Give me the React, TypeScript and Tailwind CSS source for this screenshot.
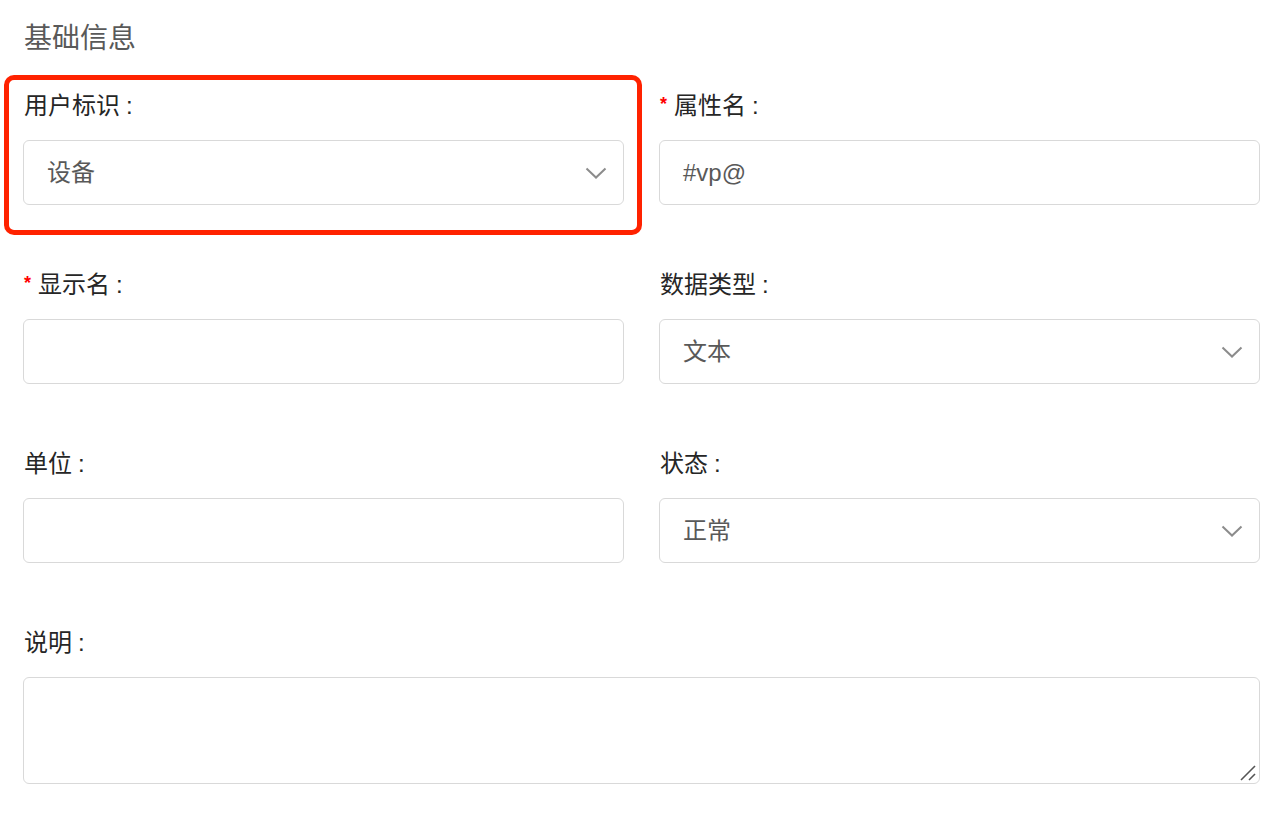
import React from "react";

const font = "font-['Liberation_Sans','Noto_Sans_CJK_SC',sans-serif]";

function Chevron() {
  return (
    <svg width="22" height="12" viewBox="0 0 22 12" className="shrink-0">
      <polyline points="1.5,1.5 11,10.5 20.5,1.5" fill="none" stroke="#8c8c8c" strokeWidth="2" />
    </svg>
  );
}

function Label({ text, required }: { text: string; required?: boolean }) {
  return (
    <div className="flex items-center h-9 mb-4 text-[24px] leading-9 text-[#262626]">
      {required && <span className="text-[#ff0000] font-bold text-[18px] mr-[7px] mt-[-5px]">*</span>}
      <span>{text}</span>
      <span className="ml-[6px]">:</span>
    </div>
  );
}

function Select({ value }: { value: string }) {
  return (
    <div className="h-[65px] border border-[#d9d9d9] rounded-[6px] flex items-center justify-between pl-[23px] pr-[16px] bg-white">
      <span className="text-[24px] text-[#595959]">{value}</span>
      <Chevron />
    </div>
  );
}

function Input({ value }: { value?: string }) {
  return (
    <div className="h-[65px] border border-[#d9d9d9] rounded-[6px] flex items-center pl-[23px] bg-white">
      <span className="text-[24px] text-[#595959]">{value}</span>
    </div>
  );
}

export default function App() {
  return (
    <div className={`${font} bg-white w-[1286px] h-[834px] pl-[23px] pr-[26px] pt-[19px]`}>
      <h2 className="text-[28px] leading-10 text-[#595959] pl-[1px]">基础信息</h2>

      <div className="grid grid-cols-2 gap-x-[35px] mt-[29px]">
        <div className="relative h-[179px]">
          {/* annotation box */}
          <div className="absolute -left-[19px] -top-[13px] -right-[18px] h-[160px] border-[5px] border-[#ff2200] rounded-[10px] pointer-events-none" />
          <div className="pl-[1px]"><Label text="用户标识" /></div>
          <Select value="设备" />
        </div>
        <div className="h-[179px]">
          <div className="pl-[1px]"><Label text="属性名" required /></div>
          <Input value="#vp@" />
        </div>

        <div className="h-[179px]">
          <div className="pl-[1px]"><Label text="显示名" required /></div>
          <Input />
        </div>
        <div className="h-[179px]">
          <div className="pl-[1px]"><Label text="数据类型" /></div>
          <Select value="文本" />
        </div>

        <div className="h-[179px]">
          <div className="pl-[1px]"><Label text="单位" /></div>
          <Input />
        </div>
        <div className="h-[179px]">
          <div className="pl-[1px]"><Label text="状态" /></div>
          <Select value="正常" />
        </div>

        <div className="col-span-2">
          <div className="pl-[1px]"><Label text="说明" /></div>
          <div className="relative">
            <textarea className="block w-full h-[107px] border border-[#d9d9d9] rounded-[6px] outline-none resize-none" />
            <svg width="18" height="18" viewBox="0 0 18 18" className="absolute right-[3px] bottom-[2px] pointer-events-none">
              <line x1="2" y1="16" x2="16" y2="2" stroke="#555" strokeWidth="1.6" />
              <line x1="10" y1="16" x2="16" y2="10" stroke="#555" strokeWidth="1.6" />
            </svg>
          </div>
        </div>
      </div>
    </div>
  );
}
